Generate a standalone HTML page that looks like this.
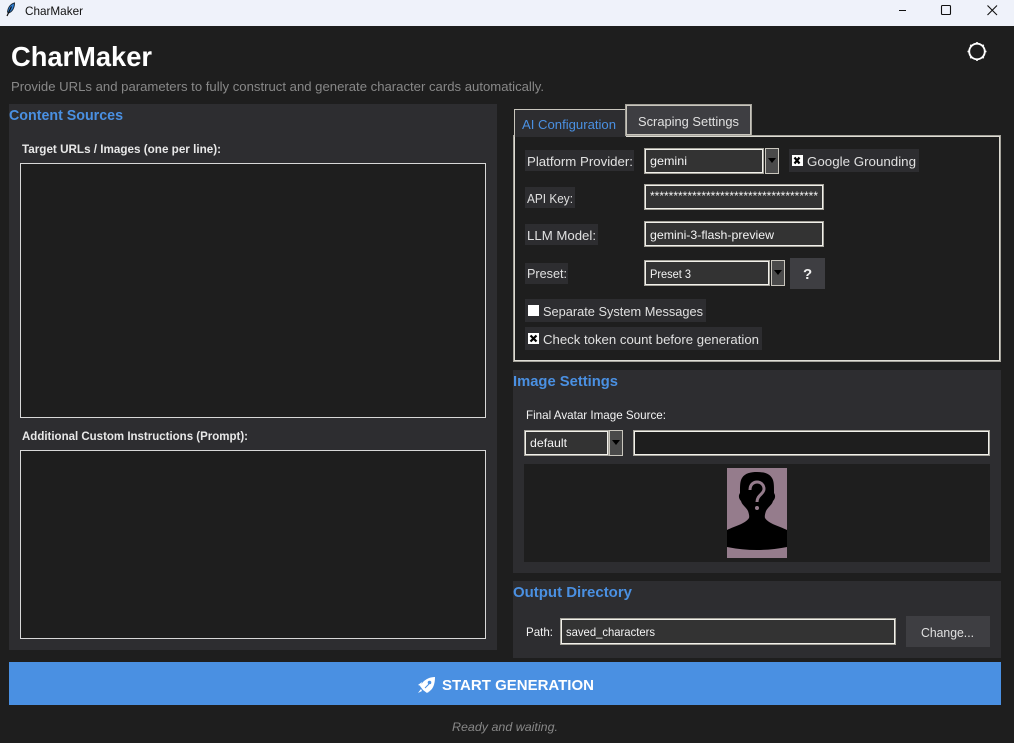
<!DOCTYPE html>
<html lang="en"><head><meta charset="utf-8"><title>CharMaker</title>
<style>
html,body{margin:0;padding:0;background:#1e1e1e;width:1014px;height:743px;overflow:hidden}
.b{position:absolute;box-sizing:border-box}
.p{background:#2d2d30}
.e{border:1px solid #a5a39b;box-shadow:inset 0 0 0 1px #f2f1eb;background:#333}
.t{background:#1e1e1e;border:1px solid #d8d8d8}
.a{background:#4a4a4a;border:1px solid #c9c6bd}
.a:after{content:"";position:absolute;left:1.5px;top:9px;border:4px solid transparent;border-top:5px solid #000;border-left-width:4.5px;border-right-width:4.5px;border-bottom-width:0}
.c{background:#fff;width:11px;height:11px}
svg.o{position:absolute;left:0;top:0}
text{font-family:"Liberation Sans",sans-serif;font-size:13px;fill:#e0e0e0}
.h{font-weight:bold;font-size:15px;fill:#4a90e2}
.l{font-weight:bold;font-size:12px;fill:#e8e8e8}
.v{font-size:12px;fill:#f4f4f4}
</style></head><body>
<div class="b" style="left:0;top:0;width:1014px;height:26px;background:#eff2fa"></div>

<div class="b p" style="left:9px;top:104px;width:488px;height:546px"></div>
<div class="b t" style="left:20px;top:163px;width:466px;height:255px"></div>
<div class="b t" style="left:20px;top:450px;width:466px;height:189px"></div>

<div class="b" style="left:513px;top:135px;width:488px;height:227px;border:1px solid #a5a39b;box-shadow:inset 0 0 0 1px #dedcd4"></div>
<div class="b p" style="left:514px;top:109px;width:112px;height:28px;border:solid #c9c6bd;border-width:1px 0 0 1px"></div>
<div class="b" style="left:625px;top:104px;width:127px;height:32px;background:#3e3e42;border:1px solid #a5a39b;box-shadow:inset 0 0 0 1px #c9c6bd"></div>

<div class="b p" style="left:525px;top:150px;width:109px;height:21px"></div>
<div class="b e" style="left:644px;top:148px;width:120px;height:26px"></div>
<div class="b a" style="left:765px;top:148px;width:14px;height:26px"></div>
<div class="b p" style="left:789px;top:149px;width:130px;height:23px"></div>
<div class="b c" style="left:792px;top:155px"></div>

<div class="b p" style="left:525px;top:187px;width:50px;height:21px"></div>
<div class="b e" style="left:644px;top:184px;width:180px;height:26px"></div>
<div class="b p" style="left:525px;top:224px;width:73px;height:21px"></div>
<div class="b e" style="left:644px;top:221px;width:180px;height:26px"></div>
<div class="b p" style="left:525px;top:263px;width:43px;height:21px"></div>
<div class="b e" style="left:644px;top:260px;width:126px;height:26px"></div>
<div class="b a" style="left:771px;top:260px;width:14px;height:26px"></div>
<div class="b" style="left:790px;top:258px;width:35px;height:31px;background:#3e3e42"></div>

<div class="b p" style="left:525px;top:299px;width:181px;height:23px"></div>
<div class="b c" style="left:528px;top:305px"></div>
<div class="b p" style="left:525px;top:327px;width:237px;height:23px"></div>
<div class="b c" style="left:528px;top:333px"></div>

<div class="b p" style="left:513px;top:370px;width:488px;height:203px"></div>
<div class="b e" style="left:524px;top:430px;width:85px;height:26px"></div>
<div class="b a" style="left:609px;top:430px;width:14px;height:26px"></div>
<div class="b e" style="left:633px;top:430px;width:357px;height:26px;background:#1e1e1e"></div>
<div class="b" style="left:524px;top:464px;width:466px;height:98px;background:#1e1e1e"></div>
<svg class="b" style="left:727px;top:468px" width="60" height="90" viewBox="0 0 60 90">
<rect width="60" height="90" fill="#957c8c"/>
<path fill="#000" d="M30 4C36 4 42 5 45 10C47 13 47 18 47 23L47 25C49 28 48 31 46 33C45 37 41 39 39 43C38 46 37.500 48 38 50C42 56 52 58 60 62L60 79Q30 85 0 79L0 62C8 58 18 56 22 50C22.500 48 22 46 21 43C19 39 15 37 14 33C12 31 11 28 13 25L13 23C13 18 13 13 15 10C18 5 24 4 30 4Z"/>
<path fill="none" stroke="#957c8c" stroke-width="3" d="M23 22C23 16 27 14 30 14C34 14 37 17 37 21C37 26 30 27 30 34"/>
<circle cx="30" cy="40" r="2" fill="#957c8c"/>
</svg>

<div class="b p" style="left:513px;top:581px;width:488px;height:77px"></div>
<div class="b e" style="left:560px;top:618px;width:336px;height:27px"></div>
<div class="b" style="left:906px;top:616px;width:84px;height:31px;background:#3e3e42"></div>

<div class="b" style="left:9px;top:662px;width:992px;height:43px;background:#4a90e2"></div>

<svg class="o" width="1014" height="743" viewBox="0 0 1014 743">
<!-- feather -->
<path d="M14.500 3C10.500 4 8 7.500 7.500 12L8.500 13C12 12 14.500 8 14.500 3Z" fill="#2f7fd6" stroke="#1a2a3a" stroke-width="1"/>
<path d="M11.500 6.500L7 16" stroke="#111" stroke-width="1.200" fill="none"/>
<!-- window controls -->
<path d="M899 10.500H906" stroke="#111" stroke-width="1"/>
<rect x="941.500" y="5.500" width="9" height="9" rx="1" fill="none" stroke="#111" stroke-width="1.100"/>
<path d="M987.500 5.500L997 15M997 5.500L987.500 15" stroke="#111" stroke-width="1.100"/>
<!-- gear -->
<circle cx="977" cy="51.500" r="7.800" fill="none" stroke="#fff" stroke-width="1.900"/>
<path d="M977 42V44.500M977 58.500V61M967.500 51.500H970M984 51.500H986.500M970.300 44.800L971.800 46.300M982.200 56.700L983.700 58.200M983.700 44.800L982.200 46.300M971.800 56.700L970.300 58.200" stroke="#fff" stroke-width="1.600"/>
<!-- check x marks -->
<path d="M794.500 157.500L799.500 163.500M799.500 157.500L794.500 163.500" stroke="#000" stroke-width="2.200"/>
<path d="M530.500 335.500L536.500 341.500M536.500 335.500L530.500 341.500" stroke="#000" stroke-width="2.200"/>
<!-- rocket -->
<path fill="#fff" d="M435 677C430 677 426 679 423 682L420 686L423 690L427 693L431 690C434 687 435 682 435 677Z"/>
<path fill="#fff" d="M422 682L418 685L421 686ZM428 693L431 689L429 692ZM421 689L418 693L422 691Z"/>
<circle cx="429.500" cy="682.500" r="1.800" fill="#4a90e2"/>
<path d="M425 688L429 684" stroke="#4a90e2" stroke-width="1"/>

<text lengthAdjust="spacingAndGlyphs" x="25" y="15" textLength="58" style="font-size:12px;fill:#111">CharMaker</text>
<text lengthAdjust="spacingAndGlyphs" x="11" y="66" textLength="141" style="font-size:28px;font-weight:bold;fill:#fff">CharMaker</text>
<text lengthAdjust="spacingAndGlyphs" x="11" y="91" textLength="533" style="fill:#888">Provide URLs and parameters to fully construct and generate character cards automatically.</text>
<text lengthAdjust="spacingAndGlyphs" class="h" x="9" y="120" textLength="114">Content Sources</text>
<text lengthAdjust="spacingAndGlyphs" class="l" x="22" y="153" textLength="199">Target URLs / Images (one per line):</text>
<text lengthAdjust="spacingAndGlyphs" class="l" x="22" y="440" textLength="226">Additional Custom Instructions (Prompt):</text>
<text lengthAdjust="spacingAndGlyphs" x="522" y="129" textLength="94" style="fill:#4a90e2">AI Configuration</text>
<text lengthAdjust="spacingAndGlyphs" x="638" y="126" textLength="101">Scraping Settings</text>
<text lengthAdjust="spacingAndGlyphs" x="527" y="166" textLength="106">Platform Provider:</text>
<text lengthAdjust="spacingAndGlyphs" class="v" x="650" y="165" textLength="37">gemini</text>
<text lengthAdjust="spacingAndGlyphs" x="807" y="166" textLength="109">Google Grounding</text>
<text lengthAdjust="spacingAndGlyphs" x="527" y="203" textLength="46">API Key:</text>
<text lengthAdjust="spacingAndGlyphs" class="v" x="650" y="200" textLength="168">************************************</text>
<text lengthAdjust="spacingAndGlyphs" x="527" y="240" textLength="69">LLM Model:</text>
<text lengthAdjust="spacingAndGlyphs" class="v" x="650" y="239" textLength="124">gemini-3-flash-preview</text>
<text lengthAdjust="spacingAndGlyphs" x="527" y="278" textLength="40">Preset:</text>
<text lengthAdjust="spacingAndGlyphs" class="v" x="650" y="278" textLength="41">Preset 3</text>
<text x="803" y="279" style="font-size:15px;font-weight:bold;fill:#f0f0f0">?</text>
<text lengthAdjust="spacingAndGlyphs" x="543" y="316" textLength="160">Separate System Messages</text>
<text lengthAdjust="spacingAndGlyphs" x="543" y="344" textLength="216">Check token count before generation</text>
<text lengthAdjust="spacingAndGlyphs" class="h" x="513" y="386" textLength="105">Image Settings</text>
<text lengthAdjust="spacingAndGlyphs" class="v" x="526" y="419" textLength="140">Final Avatar Image Source:</text>
<text lengthAdjust="spacingAndGlyphs" class="v" x="530" y="447" textLength="37">default</text>
<text lengthAdjust="spacingAndGlyphs" class="h" x="513" y="597" textLength="119">Output Directory</text>
<text lengthAdjust="spacingAndGlyphs" class="v" x="526" y="636" textLength="27">Path:</text>
<text lengthAdjust="spacingAndGlyphs" class="v" x="566" y="636" textLength="89">saved_characters</text>
<text lengthAdjust="spacingAndGlyphs" x="921" y="637" textLength="53">Change...</text>
<text lengthAdjust="spacingAndGlyphs" x="442" y="690" textLength="152" style="font-size:15px;font-weight:bold;fill:#fff">START GENERATION</text>
<text lengthAdjust="spacingAndGlyphs" x="452" y="731" textLength="106" style="font-size:12px;font-style:italic;fill:#888">Ready and waiting.</text>
</svg>
</body></html>
